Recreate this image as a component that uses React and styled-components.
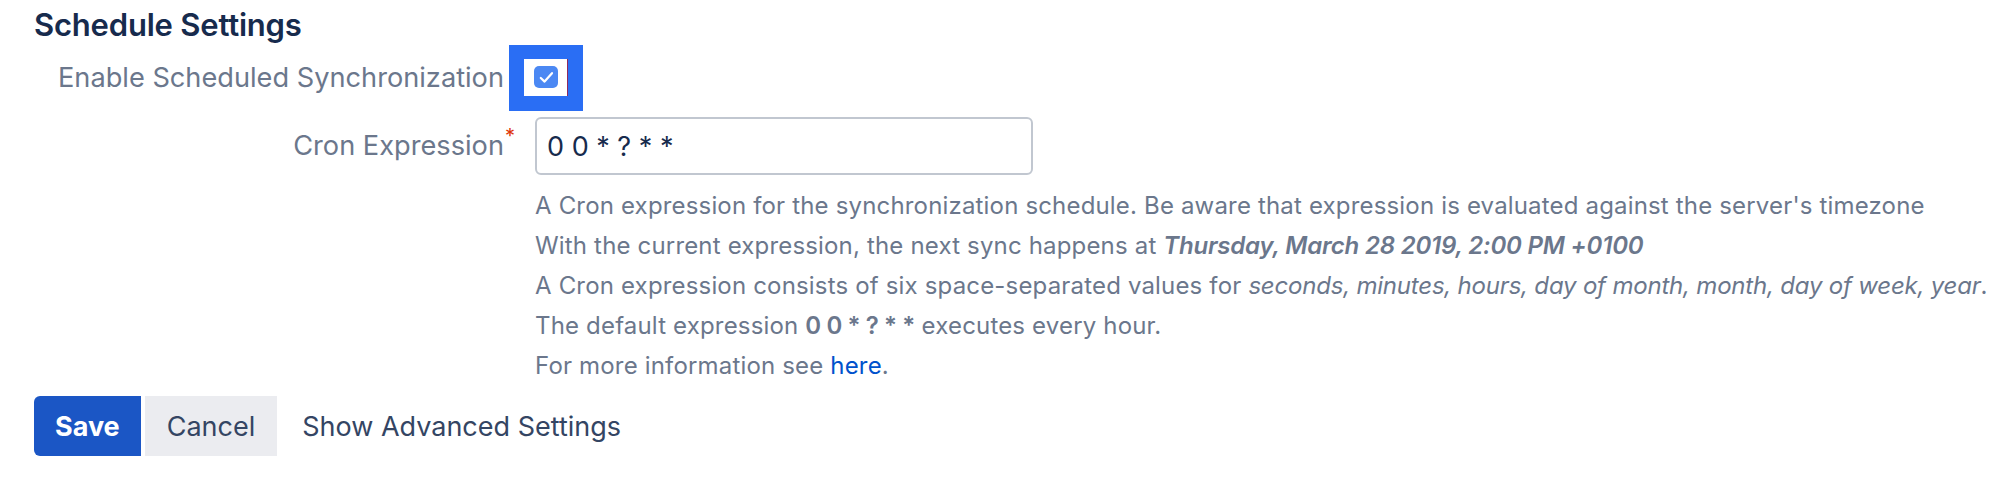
import React from 'react';
import styled, { createGlobalStyle } from 'styled-components';

const GlobalStyle = createGlobalStyle`
  body {
    margin: 0;
    background: #ffffff;
    font-family: Inter, "Liberation Sans", sans-serif;
    -webkit-font-smoothing: antialiased;
  }
`;

const Form = styled.form`
  padding: 5px 0 0 34px;
  display: flex;
  flex-direction: column;
`;

const Title = styled.h3`
  margin: 0;
  font-size: 31px;
  line-height: 40px;
  font-weight: 600;
  color: #172b4d;
  letter-spacing: -0.2px;
`;

const FieldRow = styled.div`
  display: flex;
  align-items: ${(props) => (props.top ? 'flex-start' : 'center')};
  margin-top: ${(props) => props.gap || 0}px;
`;

const Label = styled.label`
  position: relative;
  width: 470px;
  flex: none;
  text-align: right;
  font-size: 27.2px;
  line-height: 40px;
  color: #6b778c;
`;

const Required = styled.span`
  position: absolute;
  right: -11px;
  top: 0;
  font-size: 20px;
  line-height: 20px;
  color: #de350b;
`;

const Field = styled.div`
  margin-left: ${(props) => props.offset}px;
  display: flex;
  flex-direction: column;
`;

const FocusRing = styled.div`
  width: 74px;
  height: 66px;
  box-sizing: border-box;
  padding: 14px 15px 15px 15px;
  background: #2a6ef4;
`;

const CheckboxWell = styled.div`
  height: 100%;
  box-sizing: border-box;
  background: #ffffff;
  border-right: 1px solid #8e2b5f;
  padding: 7px 0 0 10px;
`;

const Checkbox = styled.span`
  display: flex;
  align-items: center;
  justify-content: center;
  width: 24px;
  height: 22px;
  border-radius: 5px;
  background: #4b88f3;
`;

const TextInput = styled.input`
  width: 498px;
  height: 58px;
  box-sizing: border-box;
  border: 2px solid #c1c7d0;
  border-radius: 6px;
  padding: 0 10px;
  font-family: inherit;
  font-size: 27px;
  color: #172b4d;
  background: #ffffff;
  outline: none;
`;

const Help = styled.div`
  margin-top: 11px;
  font-size: 24px;
  line-height: 40px;
  letter-spacing: 0.17px;
  color: #6b778c;
  white-space: nowrap;

  i {
    letter-spacing: -0.2px;
  }

  b {
    font-weight: 600;
    letter-spacing: -0.4px;
  }
`;

const Link = styled.a`
  color: #0052cc;
  text-decoration: none;
`;

const Buttons = styled.div`
  display: flex;
  align-items: center;
  gap: 4px;
  margin-top: 10px;
`;

const Button = styled.button`
  height: 60px;
  border: none;
  margin: 0;
  padding: 0 ${(props) => props.pad || 22}px;
  font-family: inherit;
  font-size: 27px;
  font-weight: ${(props) => (props.primary ? 700 : 400)};
  color: ${(props) => (props.primary ? '#ffffff' : '#344563')};
  background: ${(props) =>
    props.primary ? '#1b56c5' : props.subtle ? 'transparent' : '#ebecf0'};
  border-radius: ${(props) => (props.primary ? '6px 0 0 6px' : '0')};
  cursor: pointer;
`;

const CheckIcon = () => (
  <svg width='15' height='13' viewBox='0 0 15 13'>
    <path
      d='M1.8 7 L5.6 10.6 L13 2.2'
      fill='none'
      stroke='#ffffff'
      strokeWidth='2.2'
      strokeLinecap='round'
      strokeLinejoin='round'
    />
  </svg>
);

const App = () => (
  <>
    <GlobalStyle />
    <Form onSubmit={(e) => e.preventDefault()}>
      <Title>Schedule Settings</Title>

      <FieldRow>
        <Label>Enable Scheduled Synchronization</Label>
        <Field offset={5}>
          <FocusRing>
            <CheckboxWell>
              <Checkbox>
                <CheckIcon />
              </Checkbox>
            </CheckboxWell>
          </FocusRing>
        </Field>
      </FieldRow>

      <FieldRow top gap={6}>
        <Label style={{ marginTop: 9 }}>
          Cron Expression
          <Required>*</Required>
        </Label>
        <Field offset={31}>
          <TextInput defaultValue='0 0 * ? * *' />
          <Help>
            <div>
              A Cron expression for the synchronization schedule. Be aware that
              expression is evaluated against the server's timezone
            </div>
            <div>
              With the current expression, the next sync happens at{' '}
              <b>
                <i>Thursday, March 28 2019, 2:00 PM +0100</i>
              </b>
            </div>
            <div>
              A Cron expression consists of six space-separated values for{' '}
              <i>seconds, minutes, hours, day of month, month, day of week, year</i>.
            </div>
            <div>
              The default expression <b>0 0 * ? * *</b> executes every hour.
            </div>
            <div>
              For more information see <Link href='#'>here</Link>.
            </div>
          </Help>
        </Field>
      </FieldRow>

      <Buttons>
        <Button primary pad={21}>Save</Button>
        <Button>Cancel</Button>
        <Button subtle pad={21}>Show Advanced Settings</Button>
      </Buttons>
    </Form>
  </>
);

export default App;
